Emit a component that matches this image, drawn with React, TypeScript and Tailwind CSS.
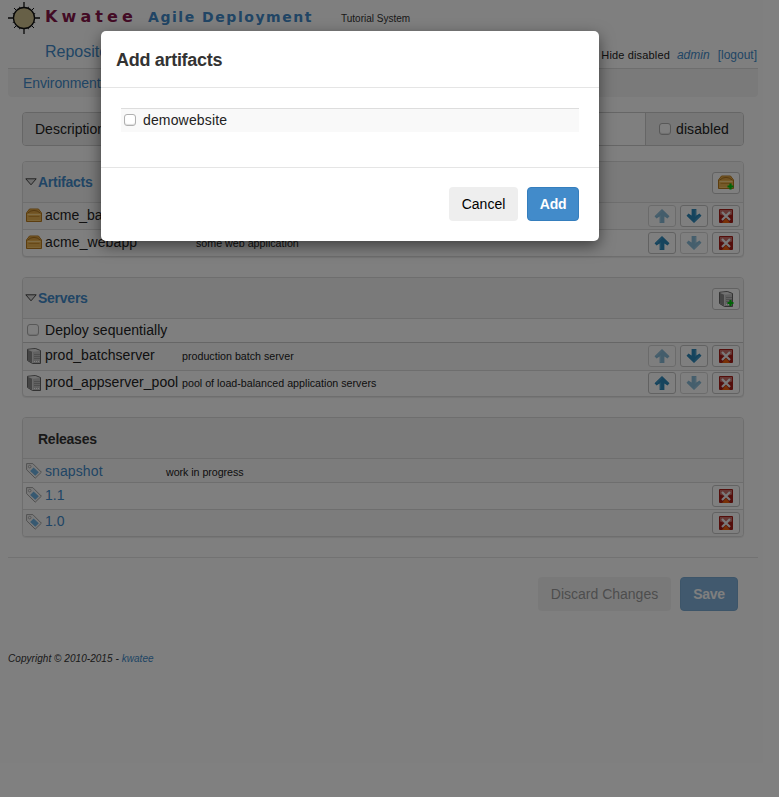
import type { ReactNode } from "react";

function Logo() {
  return (
    <svg width="32" height="32" viewBox="0 0 32 32" className="shrink-0">
      <g stroke="#111" strokeWidth="1.3">
        <path d="M16 0v32M0 16h32" />
        <path d="M6 6l20 20M26 6L6 26M11.500 4.800l9 22.400M20.500 4.800l-9 22.400M4.800 11.500l22.400 9M4.800 20.500l22.400-9" strokeWidth="1" />
      </g>
      <circle cx="16" cy="16" r="10.500" fill="#cfc08e" stroke="#111" strokeWidth="1.300" />
    </svg>
  );
}

function BoxIcon({ plus = false }: { plus?: boolean }) {
  return (
    <svg width="16" height="16" viewBox="0 0 16 16" className="block shrink-0">
      <path d="M.5 13.500V5L3.500 1h9l3 4v8.500z" fill="#ecb553" stroke="#b87a1e" />
      <path d="M1.200 5L4 1.600h8L14.800 5z" fill="#e0a545" />
      <path d="M1.500 5.200Q8 -.5 14.500 5.200" fill="none" stroke="#a06a1c" strokeWidth=".8" />
      <path d="M1.500 6.500h13" stroke="#ffd98c" />
      <path d="M2.500 8.500h11" stroke="#cf9233" />
      <path d="M1.500 12.500h13" stroke="#f6c86c" />
      {plus && <path d="M12.500 8.500v6M9.500 11.500h6" stroke="#00c60d" strokeWidth="2.200" />}
    </svg>
  );
}

function ServerIcon({ plus = false }: { plus?: boolean }) {
  return (
    <svg width="16" height="16" viewBox="0 0 16 16" className="block shrink-0">
      <path d="M1.500 1.300L9.500 .5l5 2v13H6.500l-5-3z" fill="#c2c2c2" stroke="#666" />
      <path d="M2 2l4.500 2v11L2 12.300z" fill="#8a8a8a" />
      <path d="M2 1.800l7-.8 5 2-7 .8z" fill="#e4e4e4" />
      <path d="M6.500 4v11" stroke="#e4e4e4" strokeWidth=".8" />
      <path d="M8 6.500h6M8 8.500h6M8 10.500h6" stroke="#959595" strokeWidth=".8" />
      <path d="M8 13.500h1M10 13.500h1M12 13.500h1" stroke="#fff" />
      {plus && <path d="M12.500 9v6M9.500 12h6" stroke="#00c60d" strokeWidth="2.200" />}
    </svg>
  );
}

function TagIcon() {
  return (
    <svg width="16" height="16" viewBox="0 0 16 16" className="block shrink-0">
      <path d="M.6 .6h6.200l8.600 8.600-6.200 6L.6 6.700z" fill="#f4f4f4" stroke="#999" strokeWidth=".9" />
      <circle cx="3.700" cy="3.600" r="1.300" fill="#fff" stroke="#999" strokeWidth=".8" />
      <path d="M7.600 4.500l5.200 4.700-3.500 3.500-5.200-4.700z" fill="#6fb2e2" />
    </svg>
  );
}

function ArrowIcon({ down = false }: { down?: boolean }) {
  return (
    <svg width="16" height="16" viewBox="0 0 16 16" className={down ? "block rotate-180" : "block"}>
      <path d="M8 1L15.500 8.300 13.500 10.600 10.400 8.600V15H5.600V8.600L2.500 10.600 .5 8.300z" fill="#2d88bb" />
      <path d="M8 2.500L2.500 8M6.600 7.500V14" fill="none" stroke="#4b9fcb" />
    </svg>
  );
}

function DeleteIcon() {
  return (
    <svg width="14" height="14" viewBox="0 0 14 14" className="block">
      <rect width="14" height="14" rx="1" fill="#a81c16" />
      <path d="M1 1h12v4.500Q7 8 1 5.500z" fill="#cd706a" />
      <path d="M3 14l4-5 4 5z" fill="#f0600c" />
      <path d="M3 3l8 8M11 3l-8 8" stroke="#f4f4f4" strokeWidth="2.200" />
    </svg>
  );
}

function IconButton({ children, faded = false }: { children: ReactNode; faded?: boolean }) {
  return (
    <button
      className={
        faded
          ? "flex h-[22px] w-7 items-center justify-center rounded-[3px] border border-[#bbb] bg-white opacity-55"
          : "flex h-[22px] w-7 items-center justify-center rounded-[3px] border border-[#c4c4c4] bg-white"
      }
    >
      {children}
    </button>
  );
}

function Checkbox() {
  return <span className="block h-3 w-3 shrink-0 rounded-[3px] border border-[#b0b0b0] bg-white shadow-[inset_0_-1px_1px_#ddd]" />;
}

function RowActions({ first }: { first: boolean }) {
  return (
    <div className="ml-auto flex gap-1 pr-[3px]">
      <IconButton faded={first}><ArrowIcon /></IconButton>
      <IconButton faded={!first}><ArrowIcon down /></IconButton>
      <IconButton><DeleteIcon /></IconButton>
    </div>
  );
}

const heading = "font-bold tracking-[-0.25px]";
const note = "whitespace-nowrap text-[10.7px]";

function PanelHead({ title, children }: { title: string; children: ReactNode }) {
  return (
    <div className="flex h-10 items-center bg-[#f5f5f5] pr-[3px] pl-[2px]">
      <svg width="12" height="8" viewBox="0 0 12 8" className="shrink-0">
        <path d="M.8 .8h10.400L6 6.800z" fill="#ddd" stroke="#444" />
      </svg>
      <span className={heading + " ml-[1px] text-[#428bca]"}>{title}</span>
      <div className="ml-auto pt-[2px]">{children}</div>
    </div>
  );
}

const panel = "mx-[14px] flex flex-col overflow-hidden rounded-[4px] border border-[#ddd] bg-white shadow-[0_1px_1px_rgba(0,0,0,0.08)]";

function Page() {
  return (
    <div className="h-[797px] w-[779px] bg-white pl-2 pr-[21px]">
      <header className="flex h-[36px] items-start pt-[2px]">
        <Logo />
        <span className="ml-[5px] w-[103px] whitespace-nowrap pt-[5px] font-['DejaVu_Sans'] text-[16px] leading-5 font-bold tracking-[4.1px] text-[#86164a]">Kwatee</span>
        <span className="w-[193px] whitespace-nowrap pt-[5px] font-['DejaVu_Sans'] text-[14px] leading-5 font-bold tracking-[1.55px] text-[#428bca]">Agile Deployment</span>
        <span className="pt-[9px] text-[10px] leading-4 text-[#333]">Tutorial System</span>
      </header>
      <nav className="flex h-[33px] items-center border-b border-[#ddd] pl-[37px]">
        <span className="text-[16px] leading-5 text-[#428bca]">Repository</span>
        <div className="ml-auto flex items-center pt-[5px] pr-[1px] leading-4">
          <span className="text-[11px] tracking-[0.15px]">Hide disabled</span>
          <span className="ml-[7px] text-[12px] text-[#428bca] italic">admin</span>
          <span className="ml-[8px] text-[12px] text-[#428bca]">[logout]</span>
        </div>
      </nav>
      <div className="flex h-7 items-center rounded-b-[4px] bg-[#f5f5f5] pl-[15px] tracking-[-0.1px] text-[#428bca]">Environments</div>

      <div className="mx-[14px] mt-[15px] flex h-[34px] overflow-hidden rounded-[4px] border border-[#ccc]">
        <div className="flex w-[90px] items-center bg-[#eee] pl-3">Description</div>
        <div className="flex-1 border-x border-[#ccc] bg-white" />
        <div className="flex w-[97px] items-center gap-[5px] bg-[#eee] pl-[13px] tracking-[0.1px]"><Checkbox />disabled</div>
      </div>

      <section className={panel + " mt-[15px]"}>
        <PanelHead title="Artifacts"><IconButton><BoxIcon plus /></IconButton></PanelHead>
        <div className="flex h-[27px] items-center border-t border-[#ddd] bg-[#f9f9f9] pl-[3px]">
          <BoxIcon /><span className="ml-[3px] pb-[2px]">acme_batch</span><RowActions first />
        </div>
        <div className="flex h-[27px] items-center border-t border-[#ddd] pl-[3px]">
          <BoxIcon /><span className="ml-[3px] w-[151px] pb-[2px] tracking-[0.1px]">acme_webapp</span>
          <span className={note}>some web application</span>
          <RowActions first={false} />
        </div>
      </section>

      <section className={panel + " mt-5"}>
        <PanelHead title="Servers"><IconButton><ServerIcon plus /></IconButton></PanelHead>
        <div className="flex h-6 items-center gap-[6px] border-t border-[#ddd] pb-[2px] pl-1"><Checkbox /><span className="tracking-[0.05px]">Deploy sequentially</span></div>
        <div className="flex h-[28px] items-center border-t border-[#ccc] bg-[#f9f9f9] pb-[2px] pl-[3px]">
          <ServerIcon /><span className="ml-[3px] w-[137px] pb-[2px] tracking-[0.05px]">prod_batchserver</span>
          <span className={note}>production batch server</span>
          <RowActions first />
        </div>
        <div className="flex h-[26px] items-center border-t border-[#ddd] pb-[1px] pl-[3px]">
          <ServerIcon /><span className="ml-[3px] w-[137px] pb-[2px] tracking-[0.05px]">prod_appserver_pool</span>
          <span className={note}>pool of load-balanced application servers</span>
          <RowActions first={false} />
        </div>
      </section>

      <section className={panel + " mt-5"}>
        <div className={heading + " flex h-10 items-center bg-[#f5f5f5] pt-[2px] pl-[15px] text-[#333]"}>Releases</div>
        <div className="flex h-6 items-center border-t border-[#ddd] bg-[#f9f9f9] pl-[3px]">
          <TagIcon /><span className="ml-[3px] w-[121px] tracking-[0.1px] text-[#428bca]">snapshot</span>
          <span className={note + " pt-[2px] tracking-[-0.05px]"}>work in progress</span>
        </div>
        <div className="flex h-[27px] items-center border-t border-[#ddd] pl-[3px]">
          <div className="flex items-center pb-[2px]"><TagIcon /><span className="ml-[3px] text-[#428bca]">1.1</span></div><div className="ml-auto pr-[3px]"><IconButton><DeleteIcon /></IconButton></div>
        </div>
        <div className="flex h-[27px] items-center border-t border-[#ddd] bg-[#f9f9f9] pl-[3px]">
          <div className="flex items-center pb-[3px]"><TagIcon /><span className="ml-[3px] pb-[1px] text-[#428bca]">1.0</span></div><div className="ml-auto pr-[3px]"><IconButton><DeleteIcon /></IconButton></div>
        </div>
      </section>

      <div className="mt-5 flex h-[54px] items-end justify-end gap-[9px] border-t border-[#e5e5e5] pr-5">
        <button className="h-[34px] w-[133px] rounded-[4px] bg-[#eee] text-[#666] opacity-65">Discard Changes</button>
        <button className={heading + " h-[34px] w-[58px] rounded-[4px] border border-[#357ebd] bg-[#428bca] text-white opacity-65"}>Save</button>
      </div>
      <footer className="mt-[40px] text-[10px] leading-4 tracking-[0.05px] text-[#333] italic">Copyright © 2010-2015 - <span className="text-[#428bca]">kwatee</span></footer>
    </div>
  );
}

function Modal() {
  return (
    <div className="absolute inset-0 bg-black/50">
      <div className="mt-[31px] ml-[101px] flex h-[210px] w-[498px] flex-col rounded-[5px] bg-white text-[#222] shadow-[0_5px_15px_rgba(0,0,0,0.5)]">
        <h4 className="flex h-[57px] items-center border-b border-[#e5e5e5] pt-[2px] pl-[15px] text-[18px] font-bold tracking-[-0.3px] text-[#333]">Add artifacts</h4>
        <div className="h-[79px] px-5 pt-5">
          <div className="flex h-[24px] items-center gap-[7px] border-t border-[#ddd] bg-[#f9f9f9] pb-[1px] pl-[3px] tracking-[0.15px]"><Checkbox />demowebsite</div>
        </div>
        <div className="flex flex-1 items-start justify-end gap-[9px] border-t border-[#e5e5e5] pt-[19px] pr-5">
          <button className="h-[34px] w-[69px] rounded-[4px] bg-[#eee] text-black">Cancel</button>
          <button className={heading + " h-[34px] w-[52px] rounded-[4px] border border-[#357ebd] bg-[#428bca] text-white"}>Add</button>
        </div>
      </div>
    </div>
  );
}

export default function App() {
  return (
    <div className="relative h-[797px] w-[779px] overflow-hidden font-['Liberation_Sans',Arial,sans-serif] text-[14px] leading-5 text-[#222]">
      <Page />
      <Modal />
    </div>
  );
}
